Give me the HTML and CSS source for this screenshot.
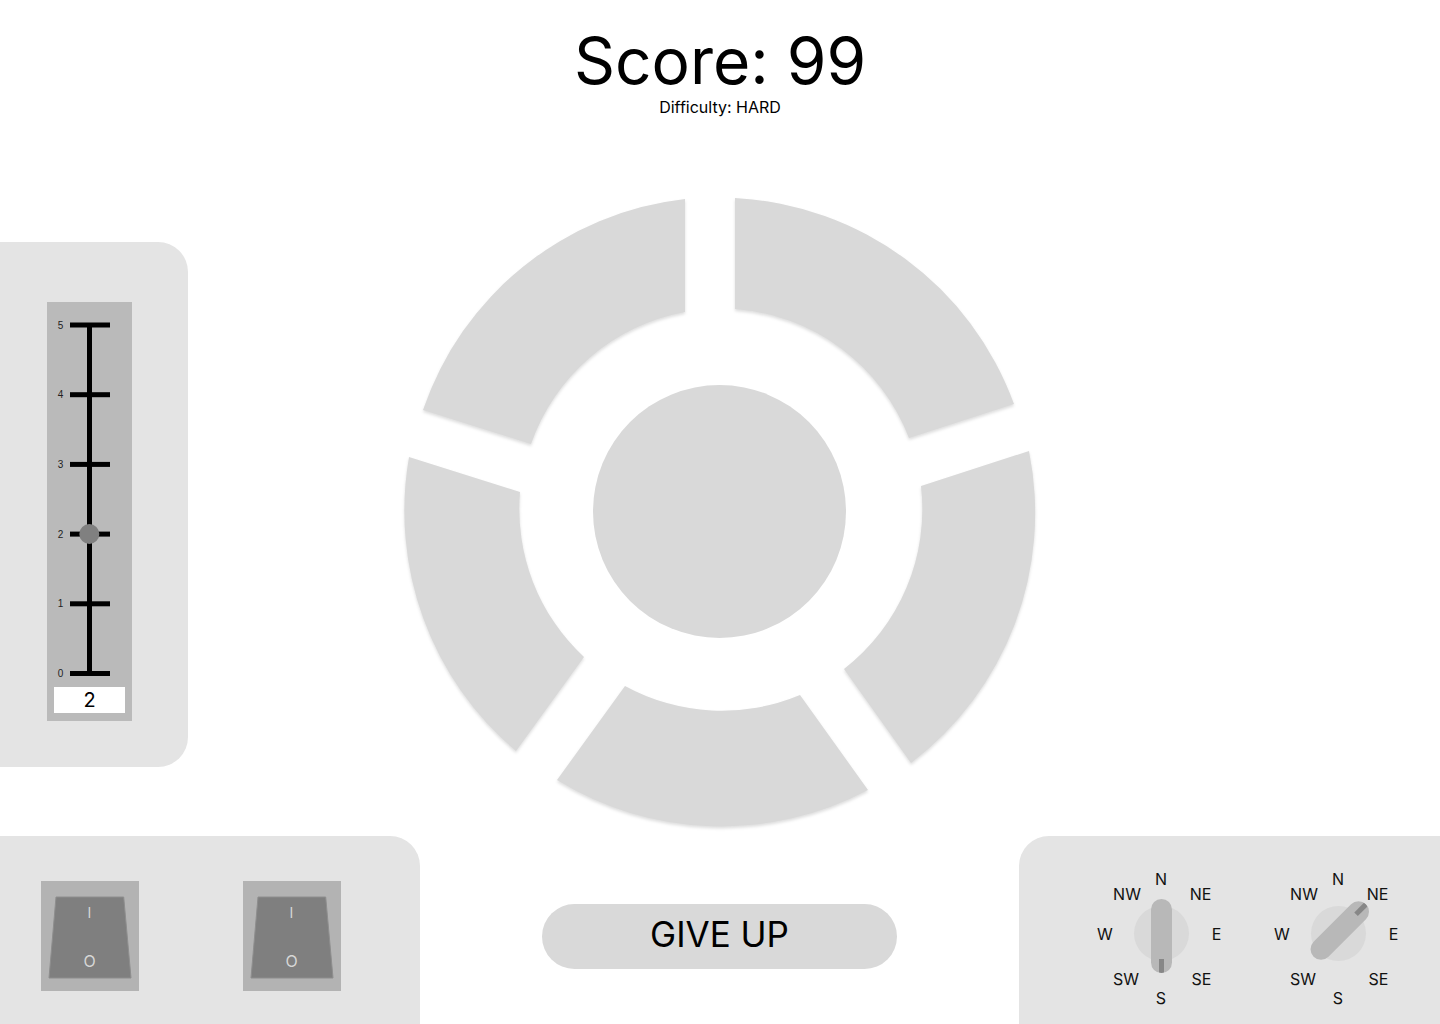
FILE: index.html
```html
<!DOCTYPE html>
<html lang="en">
<head>
<meta charset="utf-8">
<title>Score</title>
<link rel="stylesheet" href="styles.css">
</head>
<body>
<div class="app">
  <header class="header">
    <h1 class="score">Score: 99</h1>
    <p class="difficulty">Difficulty: HARD</p>
  </header>

  <main class="middle">
    <aside class="slider-panel">
      <div class="slider-box">
        <svg class="slider-scale" width="85" height="385" viewBox="0 0 85 385">
          <rect x="40" y="23" width="5" height="350" fill="#000"/>
          <g fill="#000">
            <rect x="23" y="20.5" width="40" height="5"/>
            <rect x="23" y="90.2" width="40" height="5"/>
            <rect x="23" y="159.9" width="40" height="5"/>
            <rect x="23" y="229.6" width="40" height="5"/>
            <rect x="23" y="299.3" width="40" height="5"/>
            <rect x="23" y="369" width="40" height="5"/>
          </g>
          <g class="scale-labels" text-anchor="middle">
            <text x="13.5" y="26.5">5</text>
            <text x="13.5" y="96.2">4</text>
            <text x="13.5" y="165.9">3</text>
            <text x="13.5" y="235.6">2</text>
            <text x="13.5" y="305.3">1</text>
            <text x="13.5" y="375">0</text>
          </g>
          <circle cx="42.3" cy="232" r="10" fill="#808080"/>
        </svg>
        <div class="slider-value">2</div>
      </div>
    </aside>

    <div class="ring-wrap">
      <svg class="ring" width="640" height="640" viewBox="400 192 640 640">
        <g class="segments" fill="#d9d9d9">
          <path d="M 685 199 L 685 312 A 202 202 0 0 0 531 444 L 423 410 A 314 314 0 0 1 685 199 Z"/>
          <path d="M 735 198 A 314 314 0 0 1 1014 404 L 909 438 A 202 202 0 0 0 735 309 Z"/>
          <path d="M 1029 451 A 314 314 0 0 1 911 763 L 844 669 A 202 202 0 0 0 921 486 Z"/>
          <path d="M 868 790 A 314 314 0 0 1 557 780 L 625 686 A 202 202 0 0 0 800 695 Z"/>
          <path d="M 516 751 A 314 314 0 0 1 409 457 L 520 492 A 202 202 0 0 0 584 657 Z"/>
        </g>
        <circle cx="719.5" cy="511.5" r="126.5" fill="#d9d9d9"/>
      </svg>
    </div>

    <div class="middle-spacer"></div>
  </main>

  <footer class="bottom">
    <section class="switch-panel">
      <svg class="switch" width="98" height="110" viewBox="0 0 98 110">
        <rect width="98" height="110" fill="#b3b3b3"/>
        <polygon points="15,16 82.7,16 90,97 8,97" fill="#7f7f7f" stroke="#8e8e8e" stroke-width="1"/>
        <text class="sw-on" x="48.5" y="37" text-anchor="middle">I</text>
        <text class="sw-off" x="48.5" y="86" text-anchor="middle">O</text>
      </svg>
      <svg class="switch" width="98" height="110" viewBox="0 0 98 110">
        <rect width="98" height="110" fill="#b3b3b3"/>
        <polygon points="15,16 82.7,16 90,97 8,97" fill="#7f7f7f" stroke="#8e8e8e" stroke-width="1"/>
        <text class="sw-on" x="48.5" y="37" text-anchor="middle">I</text>
        <text class="sw-off" x="48.5" y="86" text-anchor="middle">O</text>
      </svg>
    </section>

    <div class="action">
      <button class="give-up">GIVE UP</button>
    </div>

    <section class="dial-panel">
      <div class="dial">
        <span class="lbl lbl-n">N</span>
        <span class="lbl lbl-ne">NE</span>
        <span class="lbl lbl-e">E</span>
        <span class="lbl lbl-se">SE</span>
        <span class="lbl lbl-s">S</span>
        <span class="lbl lbl-sw">SW</span>
        <span class="lbl lbl-w">W</span>
        <span class="lbl lbl-nw">NW</span>
        <div class="dial-base"></div>
        <div class="knob-rot knob-s"><div class="knob"><span class="knob-mark"></span></div></div>
      </div>
      <div class="dial">
        <span class="lbl lbl-n">N</span>
        <span class="lbl lbl-ne">NE</span>
        <span class="lbl lbl-e">E</span>
        <span class="lbl lbl-se">SE</span>
        <span class="lbl lbl-s">S</span>
        <span class="lbl lbl-sw">SW</span>
        <span class="lbl lbl-w">W</span>
        <span class="lbl lbl-nw">NW</span>
        <div class="dial-base"></div>
        <div class="knob-rot knob-ne"><div class="knob"><span class="knob-mark"></span></div></div>
      </div>
    </section>
  </footer>
</div>
</body>
</html>
```

FILE: styles.css
```css
* { box-sizing: border-box; }

html, body {
  margin: 0;
  padding: 0;
  background: #ffffff;
}

body {
  font-family: Inter, "Noto Sans", "Liberation Sans", sans-serif;
  color: #000;
}

.app {
  width: 1440px;
  height: 1024px;
  overflow: hidden;
  display: grid;
  grid-template-rows: 122px 714px 188px;
}

/* Header */
.header {
  padding-top: 22px;
  text-align: center;
}

.score {
  margin: 0;
  font-size: 64px;
  line-height: 77px;
  font-weight: 400;
}

.difficulty {
  margin: -1px 0 0;
  font-size: 16px;
  line-height: 19px;
}

/* Middle */
.middle {
  display: grid;
  grid-template-columns: 188px 1fr 188px;
}

.slider-panel {
  margin-top: 120px;
  height: 525px;
  background: #e4e4e4;
  border-radius: 0 30px 30px 0;
  padding: 60px 0 0 47px;
}

.slider-box {
  width: 85px;
  height: 419px;
  background: #bababa;
  display: flex;
  flex-direction: column;
}

.slider-scale {
  display: block;
}

.scale-labels {
  font-family: "Liberation Sans", Arial, sans-serif;
  font-size: 10px;
  fill: #222;
}

.slider-value {
  margin-left: 7px;
  width: 71px;
  height: 26px;
  background: #ffffff;
  font-size: 20px;
  line-height: 26px;
  text-align: center;
}

.ring-wrap {
  padding-top: 70px;
  display: flex;
  justify-content: center;
}

.ring {
  display: block;
  overflow: visible;
}

.segments path {
  filter: drop-shadow(0 2px 1.5px rgba(0, 0, 0, 0.13));
}

/* Bottom */
.bottom {
  display: grid;
  grid-template-columns: 420px 1fr 421px;
}

.switch-panel {
  background: #e4e4e4;
  border-radius: 0 30px 0 0;
  padding: 45px 0 0 41px;
  display: flex;
  align-items: flex-start;
  gap: 104px;
}

.switch {
  display: block;
}

.sw-on {
  font-family: Inter, "Liberation Sans", sans-serif;
  font-size: 14px;
  fill: #d6d6d6;
}

.sw-off {
  font-family: Inter, "Liberation Sans", sans-serif;
  font-size: 16px;
  fill: #d6d6d6;
}

.action {
  display: flex;
  justify-content: center;
  align-items: flex-start;
  padding-top: 68px;
}

.give-up {
  width: 355px;
  height: 65px;
  border: none;
  border-radius: 33px;
  background: #d9d9d9;
  font-family: Inter, "Liberation Sans", sans-serif;
  font-size: 35px;
  line-height: 42px;
  color: #000;
  padding: 0 0 5px;
  cursor: pointer;
}

.dial-panel {
  background: #e4e4e4;
  border-radius: 30px 0 0 0;
  padding: 27px 0 0 77px;
  display: flex;
  align-items: flex-start;
  gap: 47px;
}

.dial {
  position: relative;
  width: 130px;
  height: 140px;
}

.lbl {
  position: absolute;
  transform: translate(-50%, -50%);
  font-size: 16px;
  line-height: 19px;
  color: #111;
  white-space: nowrap;
}

.lbl-n  { left: 65px;    top: 16px; }
.lbl-ne { left: 104.5px; top: 31px; }
.lbl-e  { left: 120.5px; top: 71px; }
.lbl-se { left: 105.5px; top: 115.5px; }
.lbl-s  { left: 65px;    top: 134.5px; }
.lbl-sw { left: 30px;    top: 115.5px; }
.lbl-w  { left: 9px;     top: 71px; }
.lbl-nw { left: 31px;    top: 31px; }

.dial-base {
  position: absolute;
  left: 37.5px;
  top: 42.5px;
  width: 55px;
  height: 55px;
  border-radius: 50%;
  background: #d9d9d9;
}

.knob-rot {
  position: absolute;
  left: 65px;
  top: 70px;
  width: 0;
  height: 0;
}

.knob-s { transform: rotate(0deg); }
.knob-ne { transform: rotate(225deg); }

.knob {
  position: absolute;
  left: -10.5px;
  top: -34px;
  width: 21px;
  height: 74px;
  border-radius: 10.5px;
  background: #b8b8b8;
  overflow: hidden;
}

.knob-mark {
  position: absolute;
  left: 8px;
  bottom: 0;
  width: 5px;
  height: 14px;
  background: #878787;
}
```
